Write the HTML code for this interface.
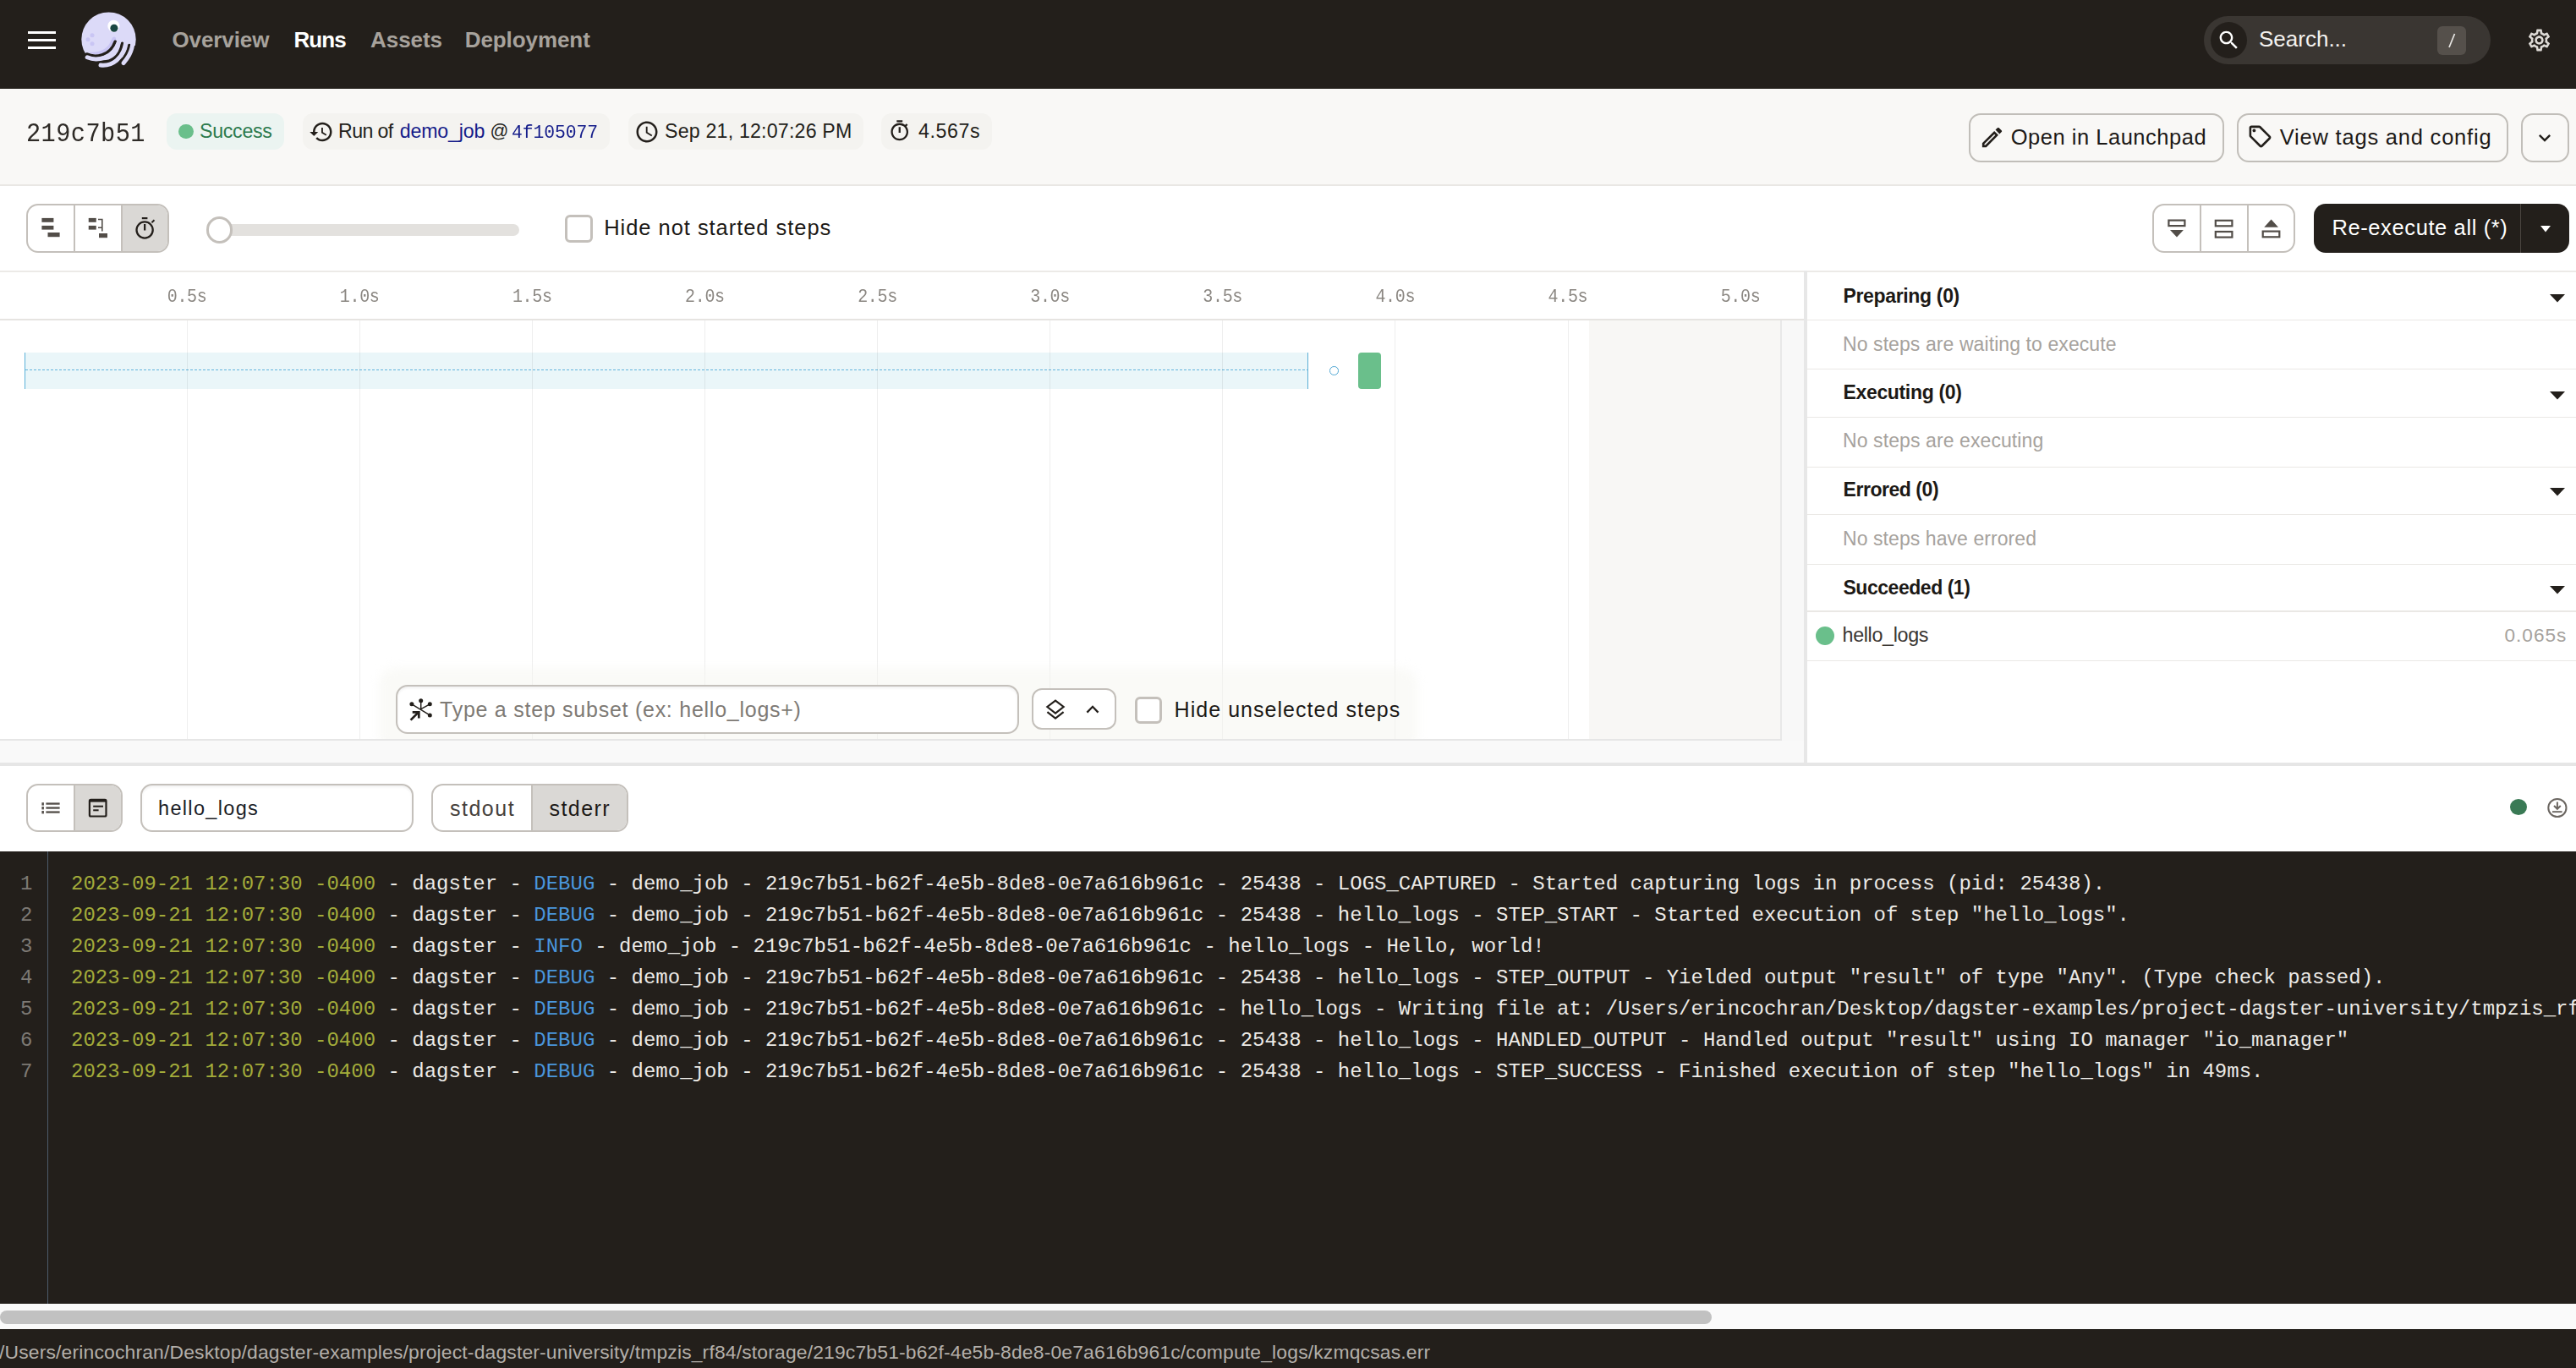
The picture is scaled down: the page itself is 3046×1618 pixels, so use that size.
<!DOCTYPE html>
<html><head><meta charset="utf-8"><title>Dagster Run</title>
<style>
html,body{margin:0;padding:0;width:3046px;height:1618px;overflow:hidden;background:#FFFFFF;}
body{position:relative;font-family:'Liberation Sans', sans-serif;}
.a{position:absolute;}
.t{position:absolute;white-space:pre;line-height:1;}
svg.a{overflow:visible;}
@media (max-width:1700px){html{zoom:0.5;}}
</style></head><body>
<div class="a" style="left:0px;top:0px;width:3046px;height:105px;background:#231F1B;"></div>
<div class="a" style="left:33px;top:36.8px;width:33px;height:3.6px;background:#FFFFFF;"></div>
<div class="a" style="left:33px;top:45.8px;width:33px;height:3.6px;background:#FFFFFF;"></div>
<div class="a" style="left:33px;top:54.8px;width:33px;height:3.6px;background:#FFFFFF;"></div>
<svg class="a" style="left:90px;top:10px;" width="80" height="76" viewBox="0 0 80 76">
<circle cx="38.5" cy="36.6" r="32.2" fill="#DCDAF8"/>
<path d="M14,51.5 C25,57 41,56 47,37.5 C48,33 43.5,32 42,36.5 C38,48 28,53 14,51.5 Z" fill="#C9C5F4"/>
<path d="M0,56 L13,56 C20,60 26,61 28,60.5 L29,64 C40,66 50,61 54,57 L56,62 C60,58 64,52 66,44 L80,44 L80,80 L0,80 Z" fill="#231F1B"/>
<path d="M12.5,54 C22,58.5 40,57 46.2,39.3" stroke="#231F1B" stroke-width="3.6" fill="none" stroke-linecap="round"/>
<path d="M26,62.4 C40,65.5 52,58 54.6,41.2" stroke="#231F1B" stroke-width="3.6" fill="none" stroke-linecap="round"/>
<path d="M53.2,62.5 C58,57 62,51 62.8,43.6" stroke="#231F1B" stroke-width="3.6" fill="none" stroke-linecap="round"/>
<path d="M13.2,57.8 C24,62.5 44,60.5 51.2,38" stroke="#DCDAF8" stroke-width="5" fill="none" stroke-linecap="round"/>
<path d="M29,67 C42,68.5 56.5,60 59.2,38" stroke="#DCDAF8" stroke-width="5" fill="none" stroke-linecap="round"/>
<path d="M56,64.6 C60,60 66,53 67.5,38" stroke="#DCDAF8" stroke-width="5" fill="none" stroke-linecap="round"/>
<circle cx="44.4" cy="20.8" r="7.1" fill="#FFFFFF"/>
<circle cx="44.9" cy="23.3" r="4.5" fill="#1C4842"/>
<circle cx="19" cy="31.7" r="2.5" fill="#C9C5F4"/>
<circle cx="14" cy="36.7" r="2.5" fill="#C9C5F4"/>
<circle cx="19" cy="41.7" r="2.5" fill="#C9C5F4"/>
</svg>
<div class="t" style="left:203.50px;top:34.23px;font-size:26px;color:#A7A29C;font-family:'Liberation Sans', sans-serif;font-weight:700;letter-spacing:-0.107px;">Overview</div>
<div class="t" style="left:347.50px;top:34.23px;font-size:26px;color:#FFFFFF;font-family:'Liberation Sans', sans-serif;font-weight:700;letter-spacing:-0.917px;">Runs</div>
<div class="t" style="left:438.00px;top:34.23px;font-size:26px;color:#A7A29C;font-family:'Liberation Sans', sans-serif;font-weight:700;letter-spacing:-0.050px;">Assets</div>
<div class="t" style="left:549.75px;top:34.23px;font-size:26px;color:#A7A29C;font-family:'Liberation Sans', sans-serif;font-weight:700;letter-spacing:-0.083px;">Deployment</div>
<div class="a" style="left:2606px;top:19px;width:339px;height:57px;background:#3A3632;border-radius:28.5px;"></div>
<div class="a" style="left:2614px;top:26px;width:43px;height:43px;background:#231F1B;border-radius:50%;"></div>
<svg class="a" style="left:2621px;top:33px;" width="29" height="29" viewBox="0 0 24 24"><path fill="#FFFFFF" d="M15.5 14h-.79l-.28-.27C15.41 12.59 16 11.11 16 9.5 16 5.91 13.09 3 9.5 3S3 5.91 3 9.5 5.91 16 9.5 16c1.61 0 3.09-.59 4.23-1.57l.27.28v.79l5 4.99L20.49 19l-4.99-5zm-6 0C7.01 14 5 11.990 5 9.5S7.01 5 9.5 5 14 7.01 14 9.5 11.99 14 9.5 14z"/></svg>
<div class="t" style="left:2671.00px;top:32.98px;font-size:26px;color:#F4F2EF;font-family:'Liberation Sans', sans-serif;font-weight:400;">Search...</div>
<div class="a" style="left:2882px;top:31px;width:34px;height:34px;background:#55504B;border-radius:6px;"></div>
<svg class="a" style="left:2882px;top:31px;" width="34" height="34" viewBox="0 0 34 34"><line x1="14" y1="25" x2="20.5" y2="9" stroke="#E8E6E3" stroke-width="1.7"/></svg>
<svg class="a" style="left:2987px;top:32px;" width="31" height="31" viewBox="0 0 24 24"><path fill="#DDDAD6" d="M19.43 12.98c.04-.32.07-.64.07-.98 0-.34-.03-.66-.07-.98l2.11-1.65c.19-.15.24-.42.12-.64l-2-3.46c-.09-.16-.26-.25-.44-.25-.06 0-.12.01-.17.03l-2.49 1c-.52-.4-1.080-.73-1.69-.98l-.38-2.65C14.46 2.18 14.25 2 14 2h-4c-.25 0-.46.18-.49.42l-.38 2.65c-.61.25-1.17.59-1.69.98l-2.49-1c-.06-.02-.12-.03-.18-.03-.17 0-.34.09-.43.25l-2 3.46c-.13.22-.07.49.12.64l2.11 1.65c-.04.32-.07.65-.07.98 0 .33.03.66.07.98l-2.11 1.65c-.19.15-.24.42-.12.64l2 3.46c.09.16.26.25.44.25.06 0 .12-.01.17-.03l2.49-1c.52.4 1.08.73 1.69.98l.38 2.65c.03.24.24.42.49.42h4c.25 0 .46-.18.49-.42l.38-2.65c.61-.25 1.17-.59 1.69-.98l2.49 1c.06.02.12.03.18.03.17 0 .34-.09.43-.25l2-3.46c.12-.22.07-.49-.12-.64l-2.11-1.65zm-1.98-1.71c.04.31.05.52.05.73 0 .21-.02.43-.05.73l-.14 1.13.89.7 1.08.84-.7 1.21-1.27-.51-1.04-.42-.9.68c-.43.32-.84.56-1.25.73l-1.06.43-.16 1.13-.2 1.35h-1.4l-.19-1.35-.16-1.13-1.06-.43c-.43-.18-.83-.41-1.23-.71l-.91-.7-1.06.43-1.27.51-.7-1.21 1.08-.84.89-.7-.14-1.130c-.03-.31-.05-.54-.05-.74s.02-.43.05-.73l.14-1.13-.89-.7-1.08-.84.7-1.21 1.27.51 1.04.42.9-.68c.43-.32.84-.56 1.25-.73l1.06-.43.16-1.13.2-1.35h1.39l.19 1.35.16 1.13 1.06.43c.43.18.83.41 1.23.71l.91.7 1.06-.43 1.27-.51.7 1.21-1.07.85-.89.7.14 1.13zM12 8c-2.21 0-4 1.79-4 4s1.79 4 4 4 4-1.79 4-4-1.79-4-4-4zm0 6c-1.1 0-2-.9-2-2s.9-2 2-2 2 .9 2 2-.9 2-2 2z"/></svg>
<div class="a" style="left:0px;top:105px;width:3046px;height:113px;background:#F9F8F6;"></div>
<div class="a" style="left:0px;top:218px;width:3046px;height:2px;background:#E9E7E4;"></div>
<div class="t" style="left:31.00px;top:146.09px;font-size:28.6px;color:#2E2A26;font-family:'Liberation Mono', monospace;font-weight:400;letter-spacing:0.460px;transform:scaleY(1.12);transform-origin:0 21.91px;">219c7b51</div>
<div class="a" style="left:197px;top:134px;width:139px;height:43px;background:#EBF4F1;border-radius:12px;"></div>
<div class="a" style="left:211.25px;top:146.5px;width:17.5px;height:17.5px;background:#6ABF8B;border-radius:50%;"></div>
<div class="t" style="left:236.00px;top:143.95px;font-size:23.2px;color:#2C7A4D;font-family:'Liberation Sans', sans-serif;font-weight:400;letter-spacing:-0.292px;">Success</div>
<div class="a" style="left:358px;top:134px;width:363px;height:43px;background:#F4F3F0;border-radius:12px;"></div>
<svg class="a" style="left:364.5px;top:141px;" width="30" height="30" viewBox="0 0 24 24"><path fill="#231F1B" d="M13 3c-4.97 0-9 4.03-9 9H1l3.89 3.89.07.14L9 12H6c0-3.87 3.13-7 7-7s7 3.13 7 7-3.13 7-7 7c-1.93 0-3.68-.79-4.94-2.06l-1.42 1.42C8.27 19.99 10.51 21 13 21c4.97 0 9-4.03 9-9s-4.03-9-9-9zm-1 5v5l4.28 2.54.72-1.21-3.5-2.08V8H12z"/></svg>
<div class="t" style="left:400.00px;top:143.95px;font-size:23.2px;color:#231F1B;font-family:'Liberation Sans', sans-serif;font-weight:400;letter-spacing:-0.600px;">Run of</div>
<div class="t" style="left:472.75px;top:143.95px;font-size:23.2px;color:#141C8A;font-family:'Liberation Sans', sans-serif;font-weight:400;letter-spacing:-0.179px;">demo_job</div>
<div class="t" style="left:579.50px;top:145.39px;font-size:21.5px;color:#231F1B;font-family:'Liberation Sans', sans-serif;font-weight:400;">@</div>
<div class="t" style="left:605.00px;top:147.11px;font-size:21.4px;color:#141C8A;font-family:'Liberation Mono', monospace;font-weight:400;letter-spacing:-0.070px;transform:scaleY(1.05);transform-origin:0 16.39px;">4f105077</div>
<div class="a" style="left:743px;top:134px;width:278px;height:43px;background:#F4F3F0;border-radius:12px;"></div>
<svg class="a" style="left:749.5px;top:140.5px;" width="30" height="30" viewBox="0 0 24 24"><path fill="#231F1B" d="M11.99 2C6.47 2 2 6.48 2 12s4.47 10 9.99 10C17.52 22 22 17.52 22 12S17.52 2 11.99 2zM12 20c-4.42 0-8-3.58-8-8s3.58-8 8-8 8 3.58 8 8-3.58 8-8 8zm.5-13H11v6l5.25 3.15.75-1.23-4.5-2.67z"/></svg>
<div class="t" style="left:786.00px;top:143.95px;font-size:23.2px;color:#231F1B;font-family:'Liberation Sans', sans-serif;font-weight:400;letter-spacing:0.194px;">Sep 21, 12:07:26 PM</div>
<div class="a" style="left:1042px;top:134px;width:131px;height:43px;background:#F4F3F0;border-radius:12px;"></div>
<svg class="a" style="left:1050.2px;top:141.2px;" width="27.5" height="27.5" viewBox="0 0 24 24"><path fill="#231F1B" d="M15 1H9v2h6V1zm-4 13h2V8h-2v6zm8.03-6.61l1.42-1.42c-.43-.51-.9-.99-1.41-1.41l-1.42 1.42C16.07 4.74 14.12 4 12 4c-4.97 0-9 4.030-9 9s4.02 9 9 9 9-4.03 9-9c0-2.12-.74-4.07-1.97-5.61zM12 20c-3.87 0-7-3.13-7-7s3.13-7 7-7 7 3.13 7 7-3.13 7-7 7z"/></svg>
<div class="t" style="left:1086.00px;top:143.95px;font-size:23.2px;color:#231F1B;font-family:'Liberation Sans', sans-serif;font-weight:400;letter-spacing:0.600px;">4.567s</div>
<div class="a" style="left:2327.5px;top:134.25px;width:302px;height:57.25px;border:2px solid #C1BEB9;border-radius:14px;box-sizing:border-box;"></div>
<svg class="a" style="left:2340px;top:147px;" width="31" height="31" viewBox="0 0 24 24"><path fill="#231F1B" d="M3 17.25V21h3.75L17.81 9.94l-3.75-3.75L3 17.25zM5.92 19H5v-.92l9.06-9.06.92.92L5.92 19zM20.710 5.63l-2.34-2.34c-.2-.2-.45-.29-.71-.29s-.51.1-.7.29l-1.83 1.83 3.75 3.75 1.83-1.83c.39-.39.39-1.02 0-1.41z"/></svg>
<div class="t" style="left:2377.75px;top:149.90px;font-size:25.5px;color:#1C1916;font-family:'Liberation Sans', sans-serif;font-weight:400;letter-spacing:0.516px;">Open in Launchpad</div>
<div class="a" style="left:2644.5px;top:134.25px;width:321px;height:57.25px;border:2px solid #C1BEB9;border-radius:14px;box-sizing:border-box;"></div>
<svg class="a" style="left:2657px;top:145.5px;" width="31" height="31" viewBox="0 0 24 24"><path fill="#231F1B" d="M21.41 11.41l-8.83-8.830c-.37-.37-.88-.58-1.41-.58H4c-1.1 0-2 .9-2 2v7.17c0 .53.21 1.04.59 1.41l8.83 8.83c.78.78 2.05.78 2.83 0l7.17-7.17c.78-.78.78-2.04-.01-2.83zM12.83 20L4 11.17V4h7.17L20 12.83 12.830 20zM6.5 5C7.33 5 8 5.67 8 6.5S7.33 8 6.5 8 5 7.33 5 6.5 5.67 5 6.5 5z"/></svg>
<div class="t" style="left:2695.75px;top:149.90px;font-size:25.5px;color:#1C1916;font-family:'Liberation Sans', sans-serif;font-weight:400;letter-spacing:0.789px;">View tags and config</div>
<div class="a" style="left:2981.25px;top:134.25px;width:56.25px;height:57.25px;border:2px solid #C1BEB9;border-radius:14px;box-sizing:border-box;"></div>
<svg class="a" style="left:2995px;top:149px;" width="28" height="28" viewBox="0 0 24 24"><path fill="#231F1B" d="M7.41 8.59L12 13.17l4.59-4.58L18 10l-6 6-6-6 1.41-1.41z"/></svg>
<div class="a" style="left:0px;top:220px;width:3046px;height:100px;background:#FFFFFF;"></div>
<div class="a" style="left:0px;top:320px;width:3046px;height:2px;background:#ECEAE7;"></div>
<div class="a" style="left:31px;top:241px;width:169px;height:57.75px;background:#FFFFFF;border:2px solid #C4C0BB;border-radius:14px;box-sizing:border-box;overflow:hidden;"></div>
<div class="a" style="left:144.5px;top:243px;width:53.5px;height:53.75px;background:#DAD8D5;border-radius:0 12px 12px 0;"></div>
<div class="a" style="left:86.75px;top:243px;width:2px;height:53.75px;background:#C4C0BB;"></div>
<div class="a" style="left:142.75px;top:243px;width:2px;height:53.75px;background:#C4C0BB;"></div>
<svg class="a" style="left:45px;top:254px;" width="30" height="30" viewBox="0 0 30 30"><rect x="4.4" y="3.9" width="14" height="4.9" fill="#524D48"/><rect x="4.4" y="12.9" width="14" height="4.7" fill="#524D48"/><rect x="11.5" y="21" width="14.1" height="5.2" fill="#524D48"/></svg>
<svg class="a" style="left:101px;top:254px;" width="30" height="30" viewBox="0 0 30 30"><rect x="3.75" y="3.9" width="9" height="4.9" fill="#524D48"/><rect x="3.75" y="12.9" width="9" height="4.7" fill="#524D48"/><rect x="16" y="22" width="10" height="5.2" fill="#524D48"/><path d="M15 5.5 H19.8 V19.6 M15 15.3 H19.8" stroke="#524D48" stroke-width="1.6" fill="none"/></svg>
<svg class="a" style="left:157px;top:254px;" width="30" height="30" viewBox="0 0 30 30"><rect x="10.8" y="3" width="6.6" height="2.2" fill="#231F1B"/><circle cx="14.1" cy="18" r="9.6" stroke="#231F1B" stroke-width="2.3" fill="none"/><rect x="13" y="11" width="2.3" height="7.5" fill="#231F1B"/><path d="M22.4 9.2 L25.5 6.3" stroke="#231F1B" stroke-width="2" /></svg>
<div class="a" style="left:259px;top:265px;width:355px;height:13.75px;background:#E3E1DE;border-radius:7px;"></div>
<div class="a" style="left:243.75px;top:256px;width:31.5px;height:31.5px;background:#FFFFFF;border:3.5px solid #C4C0BB;border-radius:50%;box-sizing:border-box;"></div>
<div class="a" style="left:668.25px;top:254.25px;width:32.5px;height:32.5px;background:#FFFFFF;border:3.5px solid #C4C0BB;border-radius:6px;box-sizing:border-box;"></div>
<div class="t" style="left:714.25px;top:257.15px;font-size:25.5px;color:#1C1916;font-family:'Liberation Sans', sans-serif;font-weight:400;letter-spacing:0.952px;">Hide not started steps</div>
<div class="a" style="left:2545.25px;top:241px;width:168.5px;height:57.5px;background:#FFFFFF;border:2px solid #C4C0BB;border-radius:14px;box-sizing:border-box;"></div>
<div class="a" style="left:2601px;top:243px;width:1.75px;height:53.5px;background:#C4C0BB;"></div>
<div class="a" style="left:2657px;top:243px;width:1.75px;height:53.5px;background:#C4C0BB;"></div>
<svg class="a" style="left:2560px;top:255px;" width="30" height="30" viewBox="0 0 30 30"><rect x="4.4" y="5.6" width="19" height="6.5" stroke="#524D48" stroke-width="2.2" fill="none"/><path d="M6 16.9 H21.9 L14 25.6 Z" fill="#524D48"/></svg>
<svg class="a" style="left:2615px;top:255px;" width="30" height="30" viewBox="0 0 30 30"><rect x="4.8" y="5.8" width="19.6" height="6.5" stroke="#524D48" stroke-width="2.2" fill="none"/><rect x="4.8" y="19" width="19.6" height="6.6" stroke="#524D48" stroke-width="2.2" fill="none"/></svg>
<svg class="a" style="left:2671px;top:255px;" width="30" height="30" viewBox="0 0 30 30"><path d="M6.25 13.75 H23 L14.6 4.4 Z" fill="#524D48"/><rect x="4.7" y="18.6" width="19.6" height="6.7" stroke="#524D48" stroke-width="2.2" fill="none"/></svg>
<div class="a" style="left:2735.6px;top:240.75px;width:302.4px;height:58px;background:#231F1B;border-radius:14px;"></div>
<div class="a" style="left:2980.3px;top:240.75px;width:1px;height:58px;background:#4A4540;"></div>
<div class="t" style="left:2757.40px;top:256.90px;font-size:25.5px;color:#FFFFFF;font-family:'Liberation Sans', sans-serif;font-weight:400;letter-spacing:0.612px;">Re-execute all (*)</div>
<svg class="a" style="left:2998px;top:262px;" width="24" height="16" viewBox="0 0 24 16"><path d="M6 4.9 H18 L12 12.6 Z" fill="#FFFFFF"/></svg>
<div class="a" style="left:0px;top:322px;width:2133px;height:55.5px;background:#FFFFFF;"></div>
<div class="a" style="left:0px;top:377.25px;width:2133px;height:1.75px;background:#E6E4E1;"></div>
<div class="a" style="left:0px;top:379px;width:2105px;height:495px;background:#FFFFFF;"></div>
<div class="a" style="left:1879px;top:379px;width:226px;height:495px;background:#F8F7F5;"></div>
<div class="a" style="left:2105px;top:379px;width:2px;height:497px;background:#E8E8E8;"></div>
<div class="a" style="left:2107px;top:379px;width:26px;height:497px;background:#F8F8F8;"></div>
<div class="t" style="left:197.75px;top:342.18px;font-size:20px;color:#8B8782;font-family:'Liberation Mono', monospace;font-weight:400;letter-spacing:-0.333px;transform:scaleY(1.1);transform-origin:0 15.32px;">0.5s</div>
<div class="t" style="left:401.85px;top:342.18px;font-size:20px;color:#8B8782;font-family:'Liberation Mono', monospace;font-weight:400;letter-spacing:-0.333px;transform:scaleY(1.1);transform-origin:0 15.32px;">1.0s</div>
<div class="t" style="left:605.95px;top:342.18px;font-size:20px;color:#8B8782;font-family:'Liberation Mono', monospace;font-weight:400;letter-spacing:-0.333px;transform:scaleY(1.1);transform-origin:0 15.32px;">1.5s</div>
<div class="t" style="left:810.05px;top:342.18px;font-size:20px;color:#8B8782;font-family:'Liberation Mono', monospace;font-weight:400;letter-spacing:-0.333px;transform:scaleY(1.1);transform-origin:0 15.32px;">2.0s</div>
<div class="t" style="left:1014.15px;top:342.18px;font-size:20px;color:#8B8782;font-family:'Liberation Mono', monospace;font-weight:400;letter-spacing:-0.333px;transform:scaleY(1.1);transform-origin:0 15.32px;">2.5s</div>
<div class="t" style="left:1218.25px;top:342.18px;font-size:20px;color:#8B8782;font-family:'Liberation Mono', monospace;font-weight:400;letter-spacing:-0.333px;transform:scaleY(1.1);transform-origin:0 15.32px;">3.0s</div>
<div class="t" style="left:1422.35px;top:342.18px;font-size:20px;color:#8B8782;font-family:'Liberation Mono', monospace;font-weight:400;letter-spacing:-0.333px;transform:scaleY(1.1);transform-origin:0 15.32px;">3.5s</div>
<div class="t" style="left:1626.45px;top:342.18px;font-size:20px;color:#8B8782;font-family:'Liberation Mono', monospace;font-weight:400;letter-spacing:-0.333px;transform:scaleY(1.1);transform-origin:0 15.32px;">4.0s</div>
<div class="t" style="left:1830.55px;top:342.18px;font-size:20px;color:#8B8782;font-family:'Liberation Mono', monospace;font-weight:400;letter-spacing:-0.333px;transform:scaleY(1.1);transform-origin:0 15.32px;">4.5s</div>
<div class="t" style="left:2034.65px;top:342.18px;font-size:20px;color:#8B8782;font-family:'Liberation Mono', monospace;font-weight:400;letter-spacing:-0.333px;transform:scaleY(1.1);transform-origin:0 15.32px;">5.0s</div>
<div class="a" style="left:29.25px;top:417px;width:1517.25px;height:43px;background:#EAF6F9;"></div>
<div class="a" style="left:28.5px;top:417px;width:1.5px;height:43px;background:#5CB2D9;"></div>
<div class="a" style="left:1546px;top:417px;width:1.2px;height:43px;background:#5AAED6;"></div>
<div class="a" style="left:30px;top:436.9px;width:1515.75px;height:1.2px;background:repeating-linear-gradient(90deg,#62B4DC 0 3px,transparent 3px 5px);"></div>
<div class="a" style="left:1572.2px;top:433.2px;width:10.8px;height:10.8px;background:#FFFFFF;border:1.3px solid #4FA6D3;border-radius:50%;box-sizing:border-box;"></div>
<div class="a" style="left:1606.1px;top:417.1px;width:26.9px;height:42.7px;background:#6ABF8B;border-radius:4px;"></div>
<div class="a" style="left:220.75px;top:379px;width:1px;height:495px;background:rgba(0,0,0,0.065);"></div>
<div class="a" style="left:424.85px;top:379px;width:1px;height:495px;background:rgba(0,0,0,0.065);"></div>
<div class="a" style="left:628.95px;top:379px;width:1px;height:495px;background:rgba(0,0,0,0.065);"></div>
<div class="a" style="left:833.05px;top:379px;width:1px;height:495px;background:rgba(0,0,0,0.065);"></div>
<div class="a" style="left:1037.15px;top:379px;width:1px;height:495px;background:rgba(0,0,0,0.065);"></div>
<div class="a" style="left:1241.25px;top:379px;width:1px;height:495px;background:rgba(0,0,0,0.065);"></div>
<div class="a" style="left:1445.35px;top:379px;width:1px;height:495px;background:rgba(0,0,0,0.065);"></div>
<div class="a" style="left:1649.45px;top:379px;width:1px;height:495px;background:rgba(0,0,0,0.065);"></div>
<div class="a" style="left:1853.55px;top:379px;width:1px;height:495px;background:rgba(0,0,0,0.065);"></div>
<div class="a" style="left:1879px;top:379px;width:226px;height:495px;background:#F8F7F5;"></div>
<div class="a" style="left:0px;top:874.25px;width:2107px;height:1.75px;background:#E6E6E6;"></div>
<div class="a" style="left:0px;top:876px;width:2133px;height:26px;background:#F9F9F9;"></div>
<div class="a" style="left:448px;top:790px;width:1228px;height:100px;background:rgba(246,245,241,0.55);border-radius:20px;filter:blur(6px);"></div>
<div class="a" style="left:0px;top:874.25px;width:2107px;height:1.75px;background:#E6E6E6;"></div>
<div class="a" style="left:0px;top:876px;width:2133px;height:26px;background:#F9F9F9;"></div>
<div class="a" style="left:468px;top:810px;width:736.75px;height:57.5px;background:#FFFFFF;border:2px solid #C4C0BB;border-radius:14px;box-sizing:border-box;box-shadow:inset 0 2px 3px rgba(0,0,0,0.06);"></div>
<svg class="a" style="left:483.5px;top:826px;" width="29" height="28" viewBox="0 0 29 28"><circle cx="13.7" cy="2.8" r="2.5" fill="#231F1B"/><circle cx="2.9" cy="6.8" r="2.5" fill="#231F1B"/><circle cx="24.3" cy="6.8" r="2.5" fill="#231F1B"/><circle cx="24.3" cy="19.9" r="2.5" fill="#231F1B"/>
<path d="M13.7 2.8 V12.6 M2.9 6.8 L24.3 19.9 M24.3 6.8 L13.7 12.6" stroke="#231F1B" stroke-width="1.5" fill="none"/>
<path d="M1.6 25.6 L10.6 16.6" stroke="#231F1B" stroke-width="2.7"/><path d="M3.7 16.3 H11.3 V23.6" stroke="#231F1B" stroke-width="2.7" fill="none"/></svg>
<div class="t" style="left:520.00px;top:826.83px;font-size:25px;color:#7E7A75;font-family:'Liberation Sans', sans-serif;font-weight:400;letter-spacing:0.743px;">Type a step subset (ex: hello_logs+)</div>
<div class="a" style="left:1220px;top:814.4px;width:100px;height:49.1px;background:#FFFFFF;border:2px solid #C4C0BB;border-radius:12px;box-sizing:border-box;"></div>
<svg class="a" style="left:1234px;top:825px;" width="28" height="28" viewBox="0 0 28 28"><path d="M14 3.6 L23.6 11 L14 18.5 L4.4 11 Z" stroke="#231F1B" stroke-width="2.2" fill="none" stroke-linejoin="miter"/><path d="M4.4 17.2 L14 24.6 L23.6 17.2" stroke="#231F1B" stroke-width="2.2" fill="none"/></svg>
<svg class="a" style="left:1280px;top:830px;" width="24" height="18" viewBox="0 0 24 18"><path d="M5.4 12.6 L12 5.8 L18.5 12.6" stroke="#231F1B" stroke-width="2.3" fill="none"/></svg>
<div class="a" style="left:1341.9px;top:823.5px;width:32.1px;height:32.1px;background:#FFFFFF;border:3.5px solid #C4C0BB;border-radius:6px;box-sizing:border-box;"></div>
<div class="t" style="left:1388.60px;top:826.83px;font-size:25px;color:#1C1916;font-family:'Liberation Sans', sans-serif;font-weight:400;letter-spacing:1.035px;">Hide unselected steps</div>
<div class="a" style="left:2133px;top:322px;width:913px;height:580px;background:#FFFFFF;"></div>
<div class="a" style="left:2133px;top:320px;width:4px;height:582px;background:#E7E7E7;"></div>
<div class="a" style="left:2137px;top:377.6px;width:909px;height:1.6px;background:#EAE8E5;"></div>
<div class="a" style="left:2137px;top:435.6px;width:909px;height:1.6px;background:#EAE8E5;"></div>
<div class="a" style="left:2137px;top:492.6px;width:909px;height:1.6px;background:#EAE8E5;"></div>
<div class="a" style="left:2137px;top:551.6px;width:909px;height:1.6px;background:#EAE8E5;"></div>
<div class="a" style="left:2137px;top:607.6px;width:909px;height:1.6px;background:#EAE8E5;"></div>
<div class="a" style="left:2137px;top:666.5px;width:909px;height:1.6px;background:#EAE8E5;"></div>
<div class="a" style="left:2137px;top:722.4px;width:909px;height:1.6px;background:#EAE8E5;"></div>
<div class="a" style="left:2137px;top:780.8px;width:909px;height:1.6px;background:#EAE8E5;"></div>
<div class="t" style="left:2179.50px;top:338.82px;font-size:23px;color:#1C1916;font-family:'Liberation Sans', sans-serif;font-weight:700;letter-spacing:-0.342px;">Preparing (0)</div>
<svg class="a" style="left:3012px;top:344.3px;" width="24" height="16" viewBox="0 0 24 16"><path d="M3 4 H21 L12 13.6 Z" fill="#231F1B"/></svg>
<div class="t" style="left:2179.50px;top:453.12px;font-size:23px;color:#1C1916;font-family:'Liberation Sans', sans-serif;font-weight:700;letter-spacing:-0.342px;">Executing (0)</div>
<svg class="a" style="left:3012px;top:458.6px;" width="24" height="16" viewBox="0 0 24 16"><path d="M3 4 H21 L12 13.6 Z" fill="#231F1B"/></svg>
<div class="t" style="left:2179.50px;top:567.72px;font-size:23px;color:#1C1916;font-family:'Liberation Sans', sans-serif;font-weight:700;letter-spacing:-0.450px;">Errored (0)</div>
<svg class="a" style="left:3012px;top:573.2px;" width="24" height="16" viewBox="0 0 24 16"><path d="M3 4 H21 L12 13.6 Z" fill="#231F1B"/></svg>
<div class="t" style="left:2179.50px;top:683.72px;font-size:23px;color:#1C1916;font-family:'Liberation Sans', sans-serif;font-weight:700;letter-spacing:-0.467px;">Succeeded (1)</div>
<svg class="a" style="left:3012px;top:689.2px;" width="24" height="16" viewBox="0 0 24 16"><path d="M3 4 H21 L12 13.6 Z" fill="#231F1B"/></svg>
<div class="t" style="left:2179.00px;top:395.52px;font-size:23px;color:#A6A29D;font-family:'Liberation Sans', sans-serif;font-weight:400;letter-spacing:0.087px;">No steps are waiting to execute</div>
<div class="t" style="left:2179.00px;top:510.32px;font-size:23px;color:#A6A29D;font-family:'Liberation Sans', sans-serif;font-weight:400;letter-spacing:0.095px;">No steps are executing</div>
<div class="t" style="left:2179.00px;top:626.32px;font-size:23px;color:#A6A29D;font-family:'Liberation Sans', sans-serif;font-weight:400;letter-spacing:0.070px;">No steps have errored</div>
<div class="a" style="left:2147px;top:741.4px;width:22px;height:22px;background:#6ABF8B;border-radius:50%;"></div>
<div class="t" style="left:2178.50px;top:740.26px;font-size:23.3px;color:#3A3632;font-family:'Liberation Sans', sans-serif;font-weight:400;letter-spacing:-0.322px;">hello_logs</div>
<div class="t" style="left:2961.50px;top:740.86px;font-size:22.6px;color:#A6A29D;font-family:'Liberation Sans', sans-serif;font-weight:400;letter-spacing:1.000px;">0.065s</div>
<div class="a" style="left:0px;top:902px;width:3046px;height:4px;background:#E6E6E6;"></div>
<div class="a" style="left:0px;top:906px;width:3046px;height:101px;background:#FFFFFF;"></div>
<div class="a" style="left:31px;top:927.25px;width:113.75px;height:56.5px;background:#FFFFFF;border:2px solid #C4C0BB;border-radius:14px;box-sizing:border-box;"></div>
<div class="a" style="left:88.5px;top:929.25px;width:54.25px;height:52.5px;background:#DAD8D5;border-radius:0 12px 12px 0;"></div>
<div class="a" style="left:86.75px;top:929.25px;width:1.75px;height:52.5px;background:#C4C0BB;"></div>
<svg class="a" style="left:45px;top:941px;" width="30" height="30" viewBox="0 0 30 30"><rect x="4.4" y="8.2" width="2.5" height="3.4" fill="#524D48"/><rect x="4.4" y="13" width="2.5" height="3.4" fill="#524D48"/><rect x="4.4" y="18" width="2.5" height="3.4" fill="#524D48"/><rect x="9.4" y="8.4" width="16.2" height="2.3" fill="#524D48"/><rect x="9.4" y="13.4" width="16.2" height="2.3" fill="#524D48"/><rect x="9.4" y="18.4" width="16.2" height="2.3" fill="#524D48"/></svg>
<svg class="a" style="left:101px;top:941px;" width="30" height="30" viewBox="0 0 30 30"><rect x="4.9" y="4.9" width="19.6" height="19.6" rx="1.5" stroke="#231F1B" stroke-width="2.2" fill="none"/><rect x="4.9" y="4.2" width="19.6" height="3.4" fill="#231F1B"/><rect x="9.2" y="11.7" width="11.8" height="2" fill="#231F1B"/><rect x="9.2" y="16.3" width="6.4" height="2" fill="#231F1B"/></svg>
<div class="a" style="left:166px;top:927.25px;width:322.5px;height:56.5px;background:#FFFFFF;border:2px solid #C4C0BB;border-radius:14px;box-sizing:border-box;box-shadow:inset 0 2px 3px rgba(0,0,0,0.06);"></div>
<div class="t" style="left:187.00px;top:944.85px;font-size:23.5px;color:#1A1D26;font-family:'Liberation Sans', sans-serif;font-weight:400;letter-spacing:1.333px;">hello_logs</div>
<div class="a" style="left:510.25px;top:927.25px;width:232.25px;height:56.5px;background:#FFFFFF;border:2px solid #C4C0BB;border-radius:14px;box-sizing:border-box;"></div>
<div class="a" style="left:630px;top:929.25px;width:110.5px;height:52.5px;background:#DAD8D5;border-radius:0 12px 12px 0;"></div>
<div class="a" style="left:628.1px;top:929.25px;width:1.9px;height:52.5px;background:#C4C0BB;"></div>
<div class="t" style="left:531.90px;top:943.83px;font-size:25px;color:#46413C;font-family:'Liberation Sans', sans-serif;font-weight:400;letter-spacing:1.520px;">stdout</div>
<div class="t" style="left:649.60px;top:943.83px;font-size:25px;color:#1C1916;font-family:'Liberation Sans', sans-serif;font-weight:400;letter-spacing:1.400px;">stderr</div>
<div class="a" style="left:2968px;top:944.9px;width:20px;height:19px;background:#3A7A55;border-radius:50%;"></div>
<svg class="a" style="left:3010px;top:941.5px;" width="28" height="28" viewBox="0 0 28 28"><circle cx="13.9" cy="13.5" r="10.6" stroke="#6B6661" stroke-width="2" fill="none"/><path d="M13.9 6.4 V14.6 M10 11 L13.9 14.8 L17.8 11" stroke="#6B6661" stroke-width="2" fill="none"/><rect x="8" y="17.2" width="11.6" height="1.9" fill="#6B6661"/></svg>
<div class="a" style="left:0px;top:1007px;width:3046px;height:534.5px;background:#231F1B;"></div>
<div class="a" style="left:56px;top:1007px;width:1.25px;height:534.5px;background:#4D5B6B;"></div>
<div class="t" style="left:24.00px;top:1034.22px;font-size:24px;color:#7D7974;font-family:'Liberation Mono', monospace;font-weight:400;">1</div>
<div class="t" style="left:84px;top:1034.22px;font-size:24px;font-family:'Liberation Mono', monospace;color:#ECEAE6;"><span style="color:#A3AC3A">2023-09-21 12:07:30 -0400</span> - dagster - <span style="color:#4A96DC">DEBUG</span> - demo_job - 219c7b51-b62f-4e5b-8de8-0e7a616b961c - 25438 - LOGS_CAPTURED - Started capturing logs in process (pid: 25438).</div>
<div class="t" style="left:24.00px;top:1071.20px;font-size:24px;color:#7D7974;font-family:'Liberation Mono', monospace;font-weight:400;">2</div>
<div class="t" style="left:84px;top:1071.20px;font-size:24px;font-family:'Liberation Mono', monospace;color:#ECEAE6;"><span style="color:#A3AC3A">2023-09-21 12:07:30 -0400</span> - dagster - <span style="color:#4A96DC">DEBUG</span> - demo_job - 219c7b51-b62f-4e5b-8de8-0e7a616b961c - 25438 - hello_logs - STEP_START - Started execution of step &quot;hello_logs&quot;.</div>
<div class="t" style="left:24.00px;top:1108.18px;font-size:24px;color:#7D7974;font-family:'Liberation Mono', monospace;font-weight:400;">3</div>
<div class="t" style="left:84px;top:1108.18px;font-size:24px;font-family:'Liberation Mono', monospace;color:#ECEAE6;"><span style="color:#A3AC3A">2023-09-21 12:07:30 -0400</span> - dagster - <span style="color:#4A96DC">INFO</span> - demo_job - 219c7b51-b62f-4e5b-8de8-0e7a616b961c - hello_logs - Hello, world!</div>
<div class="t" style="left:24.00px;top:1145.16px;font-size:24px;color:#7D7974;font-family:'Liberation Mono', monospace;font-weight:400;">4</div>
<div class="t" style="left:84px;top:1145.16px;font-size:24px;font-family:'Liberation Mono', monospace;color:#ECEAE6;"><span style="color:#A3AC3A">2023-09-21 12:07:30 -0400</span> - dagster - <span style="color:#4A96DC">DEBUG</span> - demo_job - 219c7b51-b62f-4e5b-8de8-0e7a616b961c - 25438 - hello_logs - STEP_OUTPUT - Yielded output &quot;result&quot; of type &quot;Any&quot;. (Type check passed).</div>
<div class="t" style="left:24.00px;top:1182.14px;font-size:24px;color:#7D7974;font-family:'Liberation Mono', monospace;font-weight:400;">5</div>
<div class="t" style="left:84px;top:1182.14px;font-size:24px;font-family:'Liberation Mono', monospace;color:#ECEAE6;"><span style="color:#A3AC3A">2023-09-21 12:07:30 -0400</span> - dagster - <span style="color:#4A96DC">DEBUG</span> - demo_job - 219c7b51-b62f-4e5b-8de8-0e7a616b961c - hello_logs - Writing file at: /Users/erincochran/Desktop/dagster-examples/project-dagster-university/tmpzis_rf84/storage/hello_logs/result using PickledObjectFilesystemIOManager...</div>
<div class="t" style="left:24.00px;top:1219.12px;font-size:24px;color:#7D7974;font-family:'Liberation Mono', monospace;font-weight:400;">6</div>
<div class="t" style="left:84px;top:1219.12px;font-size:24px;font-family:'Liberation Mono', monospace;color:#ECEAE6;"><span style="color:#A3AC3A">2023-09-21 12:07:30 -0400</span> - dagster - <span style="color:#4A96DC">DEBUG</span> - demo_job - 219c7b51-b62f-4e5b-8de8-0e7a616b961c - 25438 - hello_logs - HANDLED_OUTPUT - Handled output &quot;result&quot; using IO manager &quot;io_manager&quot;</div>
<div class="t" style="left:24.00px;top:1256.10px;font-size:24px;color:#7D7974;font-family:'Liberation Mono', monospace;font-weight:400;">7</div>
<div class="t" style="left:84px;top:1256.10px;font-size:24px;font-family:'Liberation Mono', monospace;color:#ECEAE6;"><span style="color:#A3AC3A">2023-09-21 12:07:30 -0400</span> - dagster - <span style="color:#4A96DC">DEBUG</span> - demo_job - 219c7b51-b62f-4e5b-8de8-0e7a616b961c - 25438 - hello_logs - STEP_SUCCESS - Finished execution of step &quot;hello_logs&quot; in 49ms.</div>
<div class="a" style="left:0px;top:1541.5px;width:3046px;height:30.5px;background:#FAFAFA;"></div>
<div class="a" style="left:0px;top:1550px;width:2024px;height:16px;background:#C1C1C1;border-radius:8px;"></div>
<div class="a" style="left:0px;top:1572px;width:3046px;height:46px;background:#231F1B;"></div>
<div class="t" style="left:-1.00px;top:1587.50px;font-size:22.9px;color:#B3AFAA;font-family:'Liberation Sans', sans-serif;font-weight:400;letter-spacing:0.158px;">/Users/erincochran/Desktop/dagster-examples/project-dagster-university/tmpzis_rf84/storage/219c7b51-b62f-4e5b-8de8-0e7a616b961c/compute_logs/kzmqcsas.err</div>
</body></html>
